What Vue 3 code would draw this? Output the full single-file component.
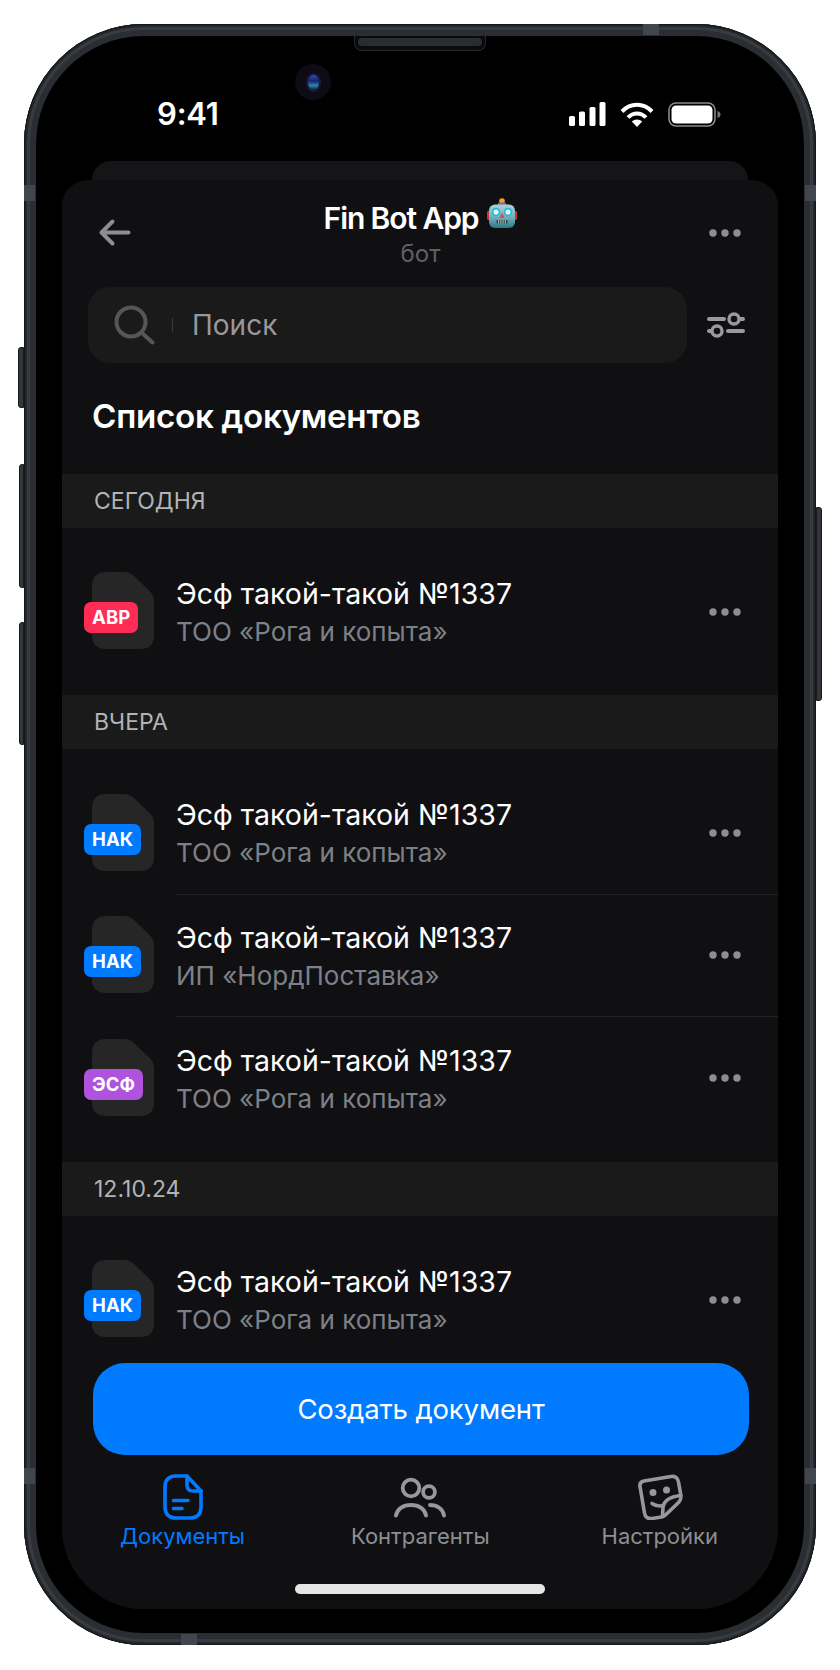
<template>
  <div class="page">
    <div class="phone">
      <!-- боковые кнопки -->
      <span class="side-btn mute"></span>
      <span class="side-btn vol-up"></span>
      <span class="side-btn vol-down"></span>
      <span class="side-btn power"></span>
      <span class="band band-tr"></span>
      <span class="band band-lt"></span>
      <span class="band band-rt"></span>
      <span class="band band-lb"></span>
      <span class="band band-rb"></span>
      <span class="band band-bl"></span>

      <div class="bezel">
        <div class="speaker"><i></i></div>
        <div class="camera"><i></i></div>

        <!-- статус-бар -->
        <div class="status">
          <span class="time">9:41</span>
          <div class="status-icons">
            <svg width="38" height="24" viewBox="0 0 38 24" fill="#fff">
              <rect x="1" y="14" width="6" height="10" rx="1.6" />
              <rect x="11" y="9.500" width="6" height="14.500" rx="1.6" />
              <rect x="21.500" y="5" width="6" height="19" rx="1.6" />
              <rect x="31.500" y="0" width="6" height="24" rx="1.6" />
            </svg>
            <svg width="34" height="25" viewBox="0 0 34 25" fill="none" stroke="#fff" stroke-width="4">
              <path d="M2 9.500C10.500 .6 23.500 .6 32 9.500" />
              <path d="M8 15.500C13 10 21 10 26 15.500" />
              <path d="M17 25 11.800 19.600C14.600 16.800 19.400 16.800 22.200 19.600Z" fill="#fff" stroke="none" />
            </svg>
            <svg width="53" height="25" viewBox="0 0 53 25">
              <rect x="1" y="1" width="46" height="23" rx="7" fill="none" stroke="#8a8a8c" stroke-width="1.6" />
              <rect x="3.500" y="3.500" width="41" height="18" rx="4.600" fill="#fff" />
              <path d="M49.500 9C51.500 9.600 52.500 11 52.500 12.500 52.500 14 51.500 15.400 49.500 16Z" fill="#77777a" />
            </svg>
          </div>
        </div>

        <div class="back-card"></div>

        <div class="screen">
          <div class="topbar">
            <svg class="back" width="34" height="29" viewBox="0 0 34 29" fill="none" stroke="#8e8e90" stroke-width="4" stroke-linecap="round" stroke-linejoin="round">
              <path d="M30.500 14.500H4M14.500 3.500 3.500 14.500 14.500 25.500" />
            </svg>
            <div class="heading">
              <div class="title">
                Fin Bot App
                <svg class="robot" width="30" height="30" viewBox="0 0 30 30">
                  <defs>
                    <linearGradient id="robot-face" x1="0" y1="0" x2="0" y2="1">
                      <stop offset="0" stop-color="#a9d3d8" />
                      <stop offset="0.55" stop-color="#6fb0bb" />
                      <stop offset="1" stop-color="#2f7686" />
                    </linearGradient>
                  </defs>
                  <rect x="0" y="13" width="3.500" height="9" rx="1.400" fill="#c8362f" />
                  <rect x="26.500" y="13" width="3.500" height="9" rx="1.400" fill="#c8362f" />
                  <circle cx="15" cy="3" r="2.800" fill="#f7a416" />
                  <rect x="11" y="4.500" width="8" height="3" rx="1" fill="#7d63a8" />
                  <rect x="2" y="6.500" width="26" height="23.500" rx="6" fill="url(#robot-face)" />
                  <circle cx="9" cy="14" r="3.400" fill="#e6fafd" stroke="#27b6dc" stroke-width="1.700" />
                  <circle cx="21" cy="14" r="3.400" fill="#e6fafd" stroke="#27b6dc" stroke-width="1.700" />
                  <path d="M15 14.500 17.500 20H12.500Z" fill="#e04a3f" />
                  <rect x="9.500" y="22" width="11" height="3.600" rx=".8" fill="#26424a" />
                  <path d="M11.700 22v3.600M13.900 22v3.600M16.100 22v3.600M18.300 22v3.600" stroke="#d6e4e6" stroke-width=".8" />
                </svg>
              </div>
              <div class="subtitle">бот</div>
            </div>
            <svg class="dots-top" width="32" height="8" viewBox="0 0 32 8" fill="#8e8e90">
              <circle cx="4" cy="4" r="3.700" /><circle cx="16" cy="4" r="3.700" /><circle cx="28" cy="4" r="3.700" />
            </svg>
          </div>

          <div class="search-row">
            <div class="search">
              <svg width="42" height="40" viewBox="0 0 42 40" fill="none" stroke="#55565a" stroke-width="4" stroke-linecap="round">
                <circle cx="17" cy="17" r="14.500" />
                <path d="M28 28 38.500 37.500" />
              </svg>
              <span class="caret"></span>
              <span class="placeholder">Поиск</span>
            </div>
            <svg class="filter" width="40" height="28" viewBox="0 0 40 28" fill="none" stroke="#9a9a9c" stroke-width="4" stroke-linecap="round">
              <path d="M4 8H19M35.500 8H38M4 20H5.500M23 20H38" />
              <circle cx="29" cy="8" r="5" stroke-width="3.400" />
              <circle cx="12" cy="20" r="5" stroke-width="3.400" />
            </svg>
          </div>

          <h1 class="list-title">Список документов</h1>

          <div class="list">
            <template v-for="group in groups" :key="group.name">
              <div class="group-name">{{ group.name }}</div>
              <div class="rows">
                <div v-for="(doc, i) in group.docs" :key="i" class="row">
                  <div class="doc-icon">
                    <svg width="62" height="77" viewBox="0 0 62 77">
                      <path d="M14 0H32C36 0 39 1.500 42 4L57 18.500C60.500 22 62 25 62 30V64C62 72 57 77 49 77H14C5 77 0 72 0 64V14C0 5 5 0 14 0Z" fill="#262627" />
                    </svg>
                    <span class="badge" :class="doc.kind">{{ doc.label }}</span>
                  </div>
                  <div class="row-body">
                    <div class="row-text">
                      <div class="row-title">Эсф такой-такой №1337</div>
                      <div class="row-sub">{{ doc.company }}</div>
                    </div>
                    <svg class="dots" width="32" height="8" viewBox="0 0 32 8" fill="#8e8e90">
                      <circle cx="4" cy="4" r="3.700" /><circle cx="16" cy="4" r="3.700" /><circle cx="28" cy="4" r="3.700" />
                    </svg>
                  </div>
                </div>
              </div>
            </template>
          </div>

          <div class="bottom">
            <button class="create">Создать документ</button>
            <div class="tabs">
              <div class="tab active">
                <svg width="40" height="46" viewBox="0 0 40 46" fill="none" stroke="#007aff" stroke-width="3.600" stroke-linecap="round" stroke-linejoin="round">
                  <path d="M24 2H13C6 2 2 6 2 13V33C2 40 6 44 13 44H27C34 44 38 40 38 33V17L24 2Z" />
                  <path d="M24 2V11C24 15 26 17 30 17H38" />
                  <path d="M10.500 26.500H25M10.500 34.500H19" />
                </svg>
                <span>Документы</span>
              </div>
              <div class="tab">
                <svg width="52" height="42" viewBox="0 0 52 42" fill="none" stroke="#98989a" stroke-width="3.800" stroke-linecap="round">
                  <circle cx="17" cy="12" r="8.300" />
                  <circle cx="35" cy="16" r="5.900" />
                  <path d="M2 39.500C3 33 9 29 17 29C25 29 31 33 32 39.500" />
                  <path d="M36 29C43 29 49 33 50 39.500" />
                </svg>
                <span>Контрагенты</span>
              </div>
              <div class="tab">
                <svg width="46" height="46" viewBox="0 0 46 46" fill="none" stroke="#98989a" stroke-width="3.600" stroke-linecap="round" stroke-linejoin="round">
                  <path d="M7 7 34 2.500C38 2 41 4 41.500 8L44 22C44 25 43.500 26.500 42 28L29 40.500C27.500 42 26 42.800 24.500 43L15 44.500C11 45 8 43 7.500 39L3 12.500C2.500 9.500 4 7.500 7 7Z" />
                  <path d="M43.500 21.500C35 22.500 27.500 25 26 33L25.500 42.500" />
                  <path d="M15 29.500C18.500 32 22 32.500 26.500 31.500" />
                  <circle cx="16" cy="18.500" r="1.700" fill="#98989a" />
                  <circle cx="29.500" cy="16" r="1.700" fill="#98989a" />
                </svg>
                <span>Настройки</span>
              </div>
            </div>
            <div class="home-bar"></div>
          </div>
        </div>
      </div>
    </div>
  </div>
</template>

<script setup>
const rogaKopyta = 'ТОО «Рога и копыта»'

const groups = [
  { name: 'СЕГОДНЯ', docs: [{ kind: 'red', label: 'АВР', company: rogaKopyta }] },
  {
    name: 'ВЧЕРА',
    docs: [
      { kind: 'blue', label: 'НАК', company: rogaKopyta },
      { kind: 'blue', label: 'НАК', company: 'ИП «НордПоставка»' },
      { kind: 'purple', label: 'ЭСФ', company: rogaKopyta }
    ]
  },
  { name: '12.10.24', docs: [{ kind: 'blue', label: 'НАК', company: rogaKopyta }] }
]
</script>

<style>
html, body {
  margin: 0;
  background: #fff;
}
</style>

<style scoped>
.page {
  width: 840px;
  height: 1670px;
  padding: 24px 24px 25px;
  box-sizing: border-box;
  font-family: Inter, "Noto Sans", sans-serif;
  overflow: hidden;
}

/* ===== корпус ===== */
.phone {
  position: relative;
  height: 100%;
  box-sizing: border-box;
  padding: 12px;
  border-radius: 120px;
  background: #2a2d31;
  box-shadow:
    inset 0 0 0 1px #15171a,
    inset 0 0 0 3px #24282b,
    inset 0 0 0 6px #383c40;
}

.side-btn {
  position: absolute;
  width: 6px;
  background: #33373b;
  border: 1px solid #17191b;
  box-sizing: border-box;
}

.mute { left: -6px; top: 323px; height: 61px; border-radius: 3px 0 0 3px; }
.vol-up { left: -5px; top: 440px; height: 124px; width: 5px; border-radius: 3px 0 0 3px; }
.vol-down { left: -5px; top: 598px; height: 123px; width: 5px; border-radius: 3px 0 0 3px; }
.power { right: -6px; top: 483px; height: 194px; border-radius: 0 3px 3px 0; }

.band {
  position: absolute;
  background: #41464e;
}

.band-tr { top: 0; left: 619px; width: 16px; height: 11px; }
.band-lt { left: 0; top: 161px; width: 11px; height: 16px; }
.band-rt { right: 0; top: 161px; width: 11px; height: 16px; }
.band-lb { left: 0; top: 1444px; width: 11px; height: 16px; }
.band-rb { right: 0; top: 1444px; width: 11px; height: 16px; }
.band-bl { left: 157px; bottom: 0; width: 16px; height: 11px; }

.bezel {
  position: relative;
  display: flex;
  flex-direction: column;
  height: 100%;
  box-sizing: border-box;
  padding: 0 26px 24px;
  border-radius: 108px;
  background: #000;
  overflow: hidden;
}

.speaker {
  position: absolute;
  left: 318px;
  top: 0;
  width: 132px;
  height: 15px;
  box-sizing: border-box;
  padding: 2px 3px 4px;
  background: #0a0b0c;
  border: 1px solid #26282b;
  border-top: none;
  border-radius: 0 0 8px 8px;
}

.speaker i {
  display: block;
  height: 100%;
  border-radius: 5px;
  background: #2a2c2e;
}

.camera {
  position: absolute;
  left: 259px;
  top: 28px;
  width: 36px;
  height: 36px;
  border-radius: 50%;
  background: #0e0b14;
  display: flex;
  align-items: center;
  justify-content: center;
}

.camera i {
  width: 15px;
  height: 19px;
  border-radius: 50%;
  background: linear-gradient(#3b4fb0, #1c1f72 40%, #1f8f98 70%, #191a4d);
  border: 2px solid #1a1a40;
  box-sizing: border-box;
}

/* ===== статус-бар ===== */
.status {
  display: flex;
  justify-content: space-between;
  align-items: center;
  height: 54px;
  margin-top: 51px;
  padding: 0 57px 0 95px;
  flex-shrink: 0;
}

.time {
  color: #fff;
  font-size: 31px;
  font-weight: 600;
  letter-spacing: -0.2px;
  line-height: 38px;
}

.status-icons {
  display: flex;
  align-items: center;
  gap: 14px;
}

.back-card {
  height: 19px;
  margin: 20px 30px 0;
  flex-shrink: 0;
  border-radius: 26px 26px 0 0;
  background: #151517;
}

/* ===== экран ===== */
.screen {
  flex: 1;
  min-height: 0;
  display: flex;
  flex-direction: column;
  border-radius: 26px 26px 82px 82px;
  background: #101012;
  overflow: hidden;
}

.topbar {
  display: flex;
  align-items: center;
  justify-content: space-between;
  height: 105px;
  flex-shrink: 0;
  padding: 0 37px 0 36px;
}

.heading {
  text-align: center;
  margin-top: 3px;
}

.title {
  display: flex;
  align-items: center;
  justify-content: center;
  gap: 9px;
  color: #fff;
  font-size: 30px;
  font-weight: 600;
  letter-spacing: -1.1px;
  line-height: 36px;
}

.robot {
  margin-top: -9px;
}

.subtitle {
  margin-top: 3px;
  color: #606063;
  font-size: 24px;
  line-height: 30px;
}

.search-row {
  display: flex;
  align-items: center;
  gap: 18px;
  padding: 2px 33px 0 26px;
  flex-shrink: 0;
}

.search {
  flex: 1;
  display: flex;
  align-items: center;
  height: 76px;
  box-sizing: border-box;
  padding: 0 0 0 26px;
  border-radius: 22px;
  background: #1a1a1b;
}

.caret {
  width: 1px;
  height: 14px;
  margin: 0 19px 0 16px;
  background: #3a3a3c;
}

.placeholder {
  color: #98989a;
  font-size: 28px;
}

.list-title {
  margin: 0;
  padding: 33px 30px 0;
  height: 63px;
  flex-shrink: 0;
  color: #fff;
  font-size: 33.200px;
  font-weight: 600;
  letter-spacing: -0.3px;
  line-height: 40px;
}

.list {
  margin-top: 14.500px;
  flex: 1;
  min-height: 0;
  overflow: hidden;
}

.group-name {
  height: 54px;
  padding-left: 32px;
  background: #1a1a1b;
  color: #b3b3b5;
  font-size: 23px;
  line-height: 54px;
}

.rows {
  padding: 23px 0 22px;
}

.row {
  display: flex;
  height: 122.500px;
}

.doc-icon {
  position: relative;
  width: 62px;
  height: 77px;
  margin: 21.500px 0 0 30px;
  flex-shrink: 0;
}

.doc-icon svg {
  display: block;
}

.badge {
  position: absolute;
  left: -8px;
  top: 30px;
  height: 31px;
  padding: 0 8px;
  border-radius: 7px;
  color: #fff;
  font-size: 18.500px;
  font-weight: 700;
  line-height: 31px;
  letter-spacing: 0.1px;
}

.badge.red { background: #ff2d55; }
.badge.blue { background: #007aff; }
.badge.purple { background: #af52de; }

.row-body {
  flex: 1;
  display: flex;
  align-items: center;
  justify-content: space-between;
  margin-left: 22px;
  padding-right: 37px;
  border-bottom: 1px solid #222224;
}

.row-text {
  margin-top: 3px;
}

.row:last-child .row-body {
  border-bottom: none;
}

.row-title {
  color: #fff;
  font-size: 28.500px;
  line-height: 38px;
}

.row-sub {
  color: #7d8089;
  font-size: 26px;
  line-height: 38px;
}

/* ===== низ ===== */
.bottom {
  flex-shrink: 0;
  background: #101012;
}

.create {
  display: block;
  width: 656px;
  height: 92px;
  margin: 0 0 0 31px;
  border: none;
  border-radius: 32px;
  background: #007aff;
  color: #fff;
  font-family: inherit;
  font-size: 27.500px;
  font-weight: 400;
  letter-spacing: -0.15px;
}

.tabs {
  display: flex;
  justify-content: space-between;
  padding: 19px 60px 0 58px;
}

.tab {
  display: flex;
  flex-direction: column;
  align-items: center;
  gap: 2px;
  color: #8e8e93;
  font-size: 22px;
  line-height: 28px;
}

.tab:nth-child(2) {
  margin-right: 6px;
}

.tab.active {
  color: #007aff;
}

.tab svg {
  height: 46px;
}

.home-bar {
  width: 250px;
  height: 10px;
  margin: 34px auto 15px;
  border-radius: 5px;
  background: #e6e6e6;
}
</style>
